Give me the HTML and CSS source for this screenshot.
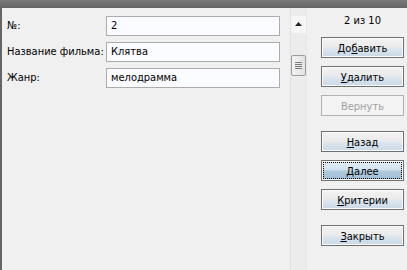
FILE: index.html
```html
<!DOCTYPE html>
<html lang="ru">
<head>
    <meta charset="UTF-8">
    <title>Фильмы</title>
    <link rel="stylesheet" href="styles.css">
</head>
<body>
    <div class="titlebar"></div>
    <div class="window">
        <div class="form">
            <label class="field-label">№:</label>
            <div class="field">2</div>
            <label class="field-label">Название фильма:</label>
            <div class="field">Клятва</div>
            <label class="field-label">Жанр:</label>
            <div class="field">мелодрамма</div>
        </div>

        <!-- vertical scroll bar -->
        <div class="scroll">
            <div class="scroll-up">
                <svg width="7" height="4" viewBox="0 0 7 4"><path d="M3.5 0 L7 4 L0 4 Z" fill="#222"/></svg>
            </div>
            <div class="scroll-thumb">
                <span></span><span></span><span></span><span></span>
            </div>
            <div class="scroll-rest"></div>
        </div>

        <div class="side">
            <div class="counter">2 из 10</div>
            <div class="btn-group">
                <button class="btn">До<u>б</u>авить</button>
                <button class="btn"><u>У</u>далить</button>
                <button class="btn" disabled>Вернуть</button>
            </div>
            <div class="btn-group">
                <button class="btn"><u>Н</u>азад</button>
                <button class="btn focused"><u>Д</u>алее</button>
                <button class="btn"><u>К</u>ритерии</button>
            </div>
            <div class="btn-group">
                <button class="btn"><u>З</u>акрыть</button>
            </div>
        </div>
    </div>
</body>
</html>
```

FILE: styles.css
```css
body {
    margin: 0;
    height: 270px;
    overflow: hidden;
    background-color: #f0f0f0;
    font-family: "DejaVu Sans Condensed", "DejaVu Sans", sans-serif;
    font-size: 11px;
    color: #000;
}

.titlebar {
    height: 8px;
    background: linear-gradient(#7a7a7a, #646464);
}

.window {
    display: flex;
    height: 262px;
    border-left: 2px solid #666;
}

/* Form fields */
.form {
    width: 283px;
    padding: 8px 0 0 5px;
    display: grid;
    grid-template-columns: 99px 174px;
    grid-auto-rows: 20px;
    row-gap: 6px;
    align-content: start;
}

.field-label {
    line-height: 20px;
    white-space: nowrap;
}

.field {
    border: 1px solid #acacac;
    background-color: #fafcff;
    padding: 0 4px;
    line-height: 18px;
}

/* Scroll bar */
.scroll {
    width: 17px;
    display: flex;
    flex-direction: column;
    background-color: #ececec;
    border-left: 1px solid #e2e2e2;
    border-right: 1px solid #e8e8e8;
    box-sizing: border-box;
}

.scroll-up {
    height: 17px;
    margin-top: 8px;
    background-color: #f6f6f6;
    display: flex;
    justify-content: center;
    padding-top: 6px;
    box-sizing: border-box;
}

.scroll-thumb {
    height: 19px;
    margin-top: 22px;
    border: 1px solid #9c9c9c;
    border-radius: 2px;
    background: linear-gradient(to right, #f4f4f4, #e2e2e2);
    display: flex;
    flex-direction: column;
    justify-content: center;
    align-items: center;
    gap: 1px;
}

.scroll-thumb span {
    width: 7px;
    height: 1px;
    background-color: #7a7a7a;
}

.scroll-rest {
    flex: 1;
}

/* Right column */
.side {
    width: 100px;
    padding: 6px 0 0 14px;
    box-sizing: border-box;
}

.counter {
    width: 83px;
    text-align: center;
    line-height: 14px;
    margin-bottom: 9px;
}

.btn-group {
    display: flex;
    flex-direction: column;
    gap: 8px;
    margin-bottom: 15px;
}

.btn {
    width: 83px;
    height: 21px;
    padding: 2px 0 0 0;
    font-family: inherit;
    font-size: 11px;
    color: #000;
    border: 1px solid #707070;
    border-radius: 0;
    box-shadow: inset 0 0 0 1px #fbfbfb;
    background: linear-gradient(#f2f2f2 0%, #ebebeb 45%, #dde6ee 55%, #c8d9e7 100%);
}

.btn:disabled {
    color: #a0a0a0;
    border-color: #adb2b5;
    box-shadow: none;
    background: #f4f4f4;
}

.btn.focused {
    background: linear-gradient(#e4eef6 0%, #d2e2ee 45%, #aec8dc 55%, #a4c0d6 100%);
    outline: 1px dotted #000;
    outline-offset: -3px;
}
```
